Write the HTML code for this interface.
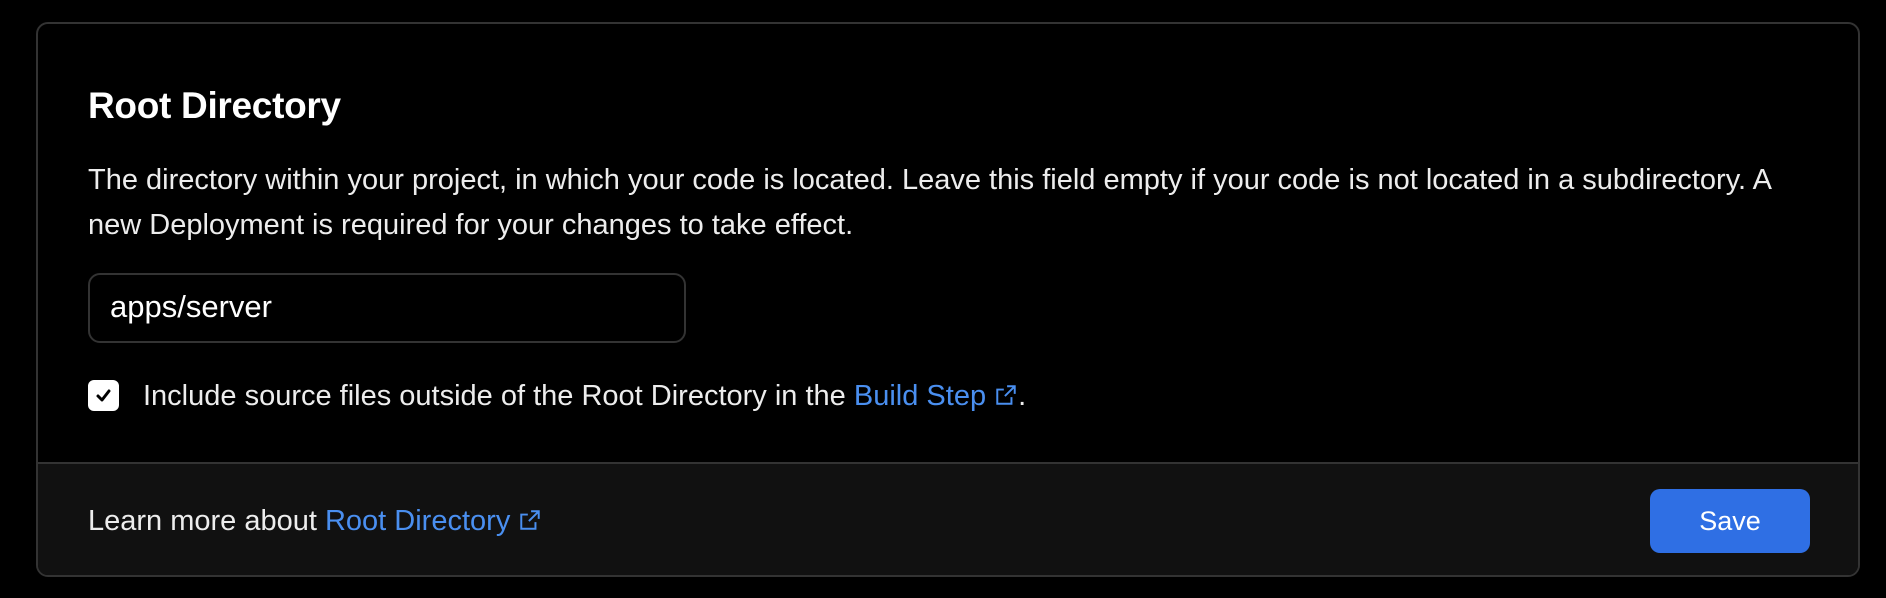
<!DOCTYPE html>
<html><head><meta charset="utf-8"><style>
*{margin:0;padding:0;box-sizing:border-box}
body{width:1886px;height:598px;background:#000;font-family:"Liberation Sans",sans-serif;color:#ededed;position:relative;overflow:hidden}
.card{position:absolute;left:36px;top:22px;width:1824px;height:555px;border:2px solid #333;border-radius:12px;overflow:hidden;background:#000}
.abs{position:absolute;white-space:nowrap}
h1{position:absolute;left:50px;top:61px;font-size:37px;font-weight:bold;color:#fff;letter-spacing:-0.3px}
.desc{position:absolute;left:50px;top:134px;width:1730px;font-size:29px;line-height:44.5px;color:#ededed;white-space:normal}
.input{position:absolute;left:50px;top:249px;width:598px;height:70px;border:2px solid #333;border-radius:12px;font-size:31px;padding:0 0 0 20px;line-height:64px;color:#fff}
.cb{position:absolute;left:50px;top:356px;width:31px;height:31px;background:#fff;border-radius:6px}
.link{color:#4a8ff0}
.footer{position:absolute;left:0;top:438px;width:100%;height:120px;background:#111;border-top:2px solid #333}
.btn{position:absolute;left:1612px;top:25px;width:160px;height:64px;background:#2f6fe4;border-radius:10px;color:#fff;font-size:27px;text-align:center;line-height:64px}
</style></head><body>
<div class="card">
<h1>Root Directory</h1>
<div class="desc">The directory within your project, in which your code is located. Leave this field empty if your code is not located in a subdirectory. A new Deployment is required for your changes to take effect.</div>
<div class="input">apps/server</div>
<div class="cb"><svg width="31" height="31" viewBox="0 0 31 31"><path d="M10 16l4 4 7-9" stroke="#000" stroke-width="3" fill="none" stroke-linecap="round" stroke-linejoin="round"/></svg></div>
<div class="abs" style="left:105px;top:356px;font-size:29px;line-height:32px">Include source files outside of the Root Directory in the <span class="link">Build Step <svg width="24" height="24" viewBox="0 0 22 22" style="vertical-align:-2px"><path d="M12 3h7v7M19 3l-9 9M16 13v6H3V6h6" stroke="#4a8ff0" stroke-width="1.8" fill="none"/></svg></span>.</div>
<div class="footer">
<div class="abs" style="left:50px;top:41px;font-size:29px;line-height:32px">Learn more about <span class="link">Root Directory <svg width="24" height="24" viewBox="0 0 22 22" style="vertical-align:-2px"><path d="M12 3h7v7M19 3l-9 9M16 13v6H3V6h6" stroke="#4a8ff0" stroke-width="1.8" fill="none"/></svg></span></div>
<div class="btn">Save</div>
</div>
</div>
</body></html>
